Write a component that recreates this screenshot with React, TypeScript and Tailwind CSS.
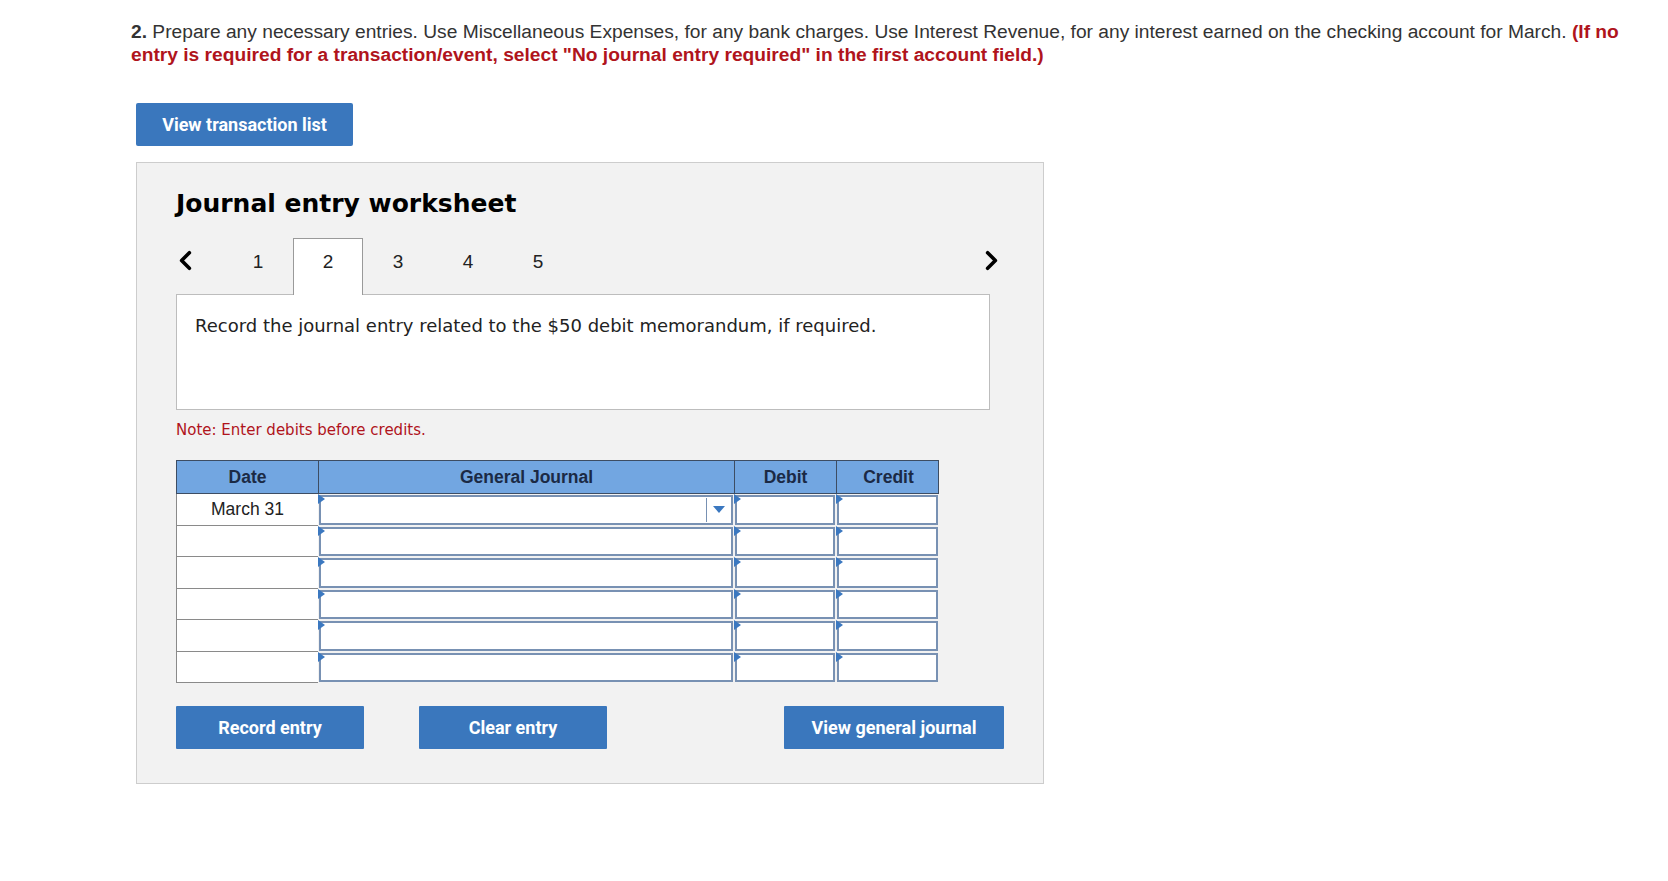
import { ChevronLeft, ChevronRight } from 'lucide-react';

const tabs = [1, 2, 3, 4, 5];
const rows = ['March 31', '', '', '', '', ''];

function Flag() {
  return (
    <svg className="absolute left-0 top-0" width="7" height="10" viewBox="0 0 7 10">
      <polygon points="0,0 7,5 0,10" fill="#3b78c0" />
    </svg>
  );
}

function InputCell({ dropdown }: { dropdown?: boolean }) {
  return (
    <div className="relative h-full p-[1px] bg-[#f2f2f2]">
      <div className="relative h-full bg-white border-2 border-[#7891b3] flex justify-end">
        {dropdown && (
          <div className="w-[25px] my-[1px] border-l border-[#7891b3] flex items-center justify-center">
            <svg width="12" height="7" viewBox="0 0 12 7">
              <polygon points="0,0 12,0 6,7" fill="#3b78c0" />
            </svg>
          </div>
        )}
      </div>
      <Flag />
    </div>
  );
}

export default function App() {
  return (
    <div className="min-h-screen bg-white font-['Liberation_Sans',Arial,sans-serif] text-[#333]">
      <div className="pl-[131px] pt-[20px]">
        <p className="w-[1510px] text-[19.2px] leading-[23px]">
          <b>2.</b> Prepare any necessary entries. Use Miscellaneous Expenses, for any bank charges. Use Interest Revenue, for any interest earned on the checking account for March.{' '}
          <b className="text-[#b0141c]">
            (If no entry is required for a transaction/event, select "No journal entry required" in the first account field.)
          </b>
        </p>
      </div>

      <div className="pl-[136px] pt-[37px] pb-10">
        <button className="h-[43px] w-[217px] bg-[#3a77bd] rounded-[2px] text-white font-['Roboto',sans-serif] font-bold text-[18px]">
          View transaction list
        </button>

        <div className="mt-[16px] w-[908px] bg-[#f2f2f2] border border-[#cdcdcd] pl-[39px] pr-[53px] pt-[26px] pb-[34px]">
          <h2 className="font-['DejaVu_Sans',Verdana,sans-serif] font-bold text-[25px] leading-[30px] text-black">
            Journal entry worksheet
          </h2>

          {/* tabs */}
          <div className="mt-[19px] flex items-stretch h-[56px] w-[823px] relative z-10">
            <div className="w-[47px] flex items-center pb-[12px]">
              <ChevronLeft className="w-[31px] h-[31px] -ml-[6px] text-black" strokeWidth={2.8} />
            </div>
            {tabs.map((t) => (
              <div
                key={t}
                className={
                  t === 2
                    ? 'w-[70px] -mb-[1px] pb-[9px] flex items-center justify-center bg-white border border-b-0 border-[#9a9a9a] text-[19px] text-[#222]'
                    : 'w-[70px] pb-[8px] flex items-center justify-center text-[19px] text-[#222]'
                }
              >
                {t}
              </div>
            ))}
            <div className="flex-1 flex items-center justify-end pb-[12px]">
              <ChevronRight className="w-[31px] h-[31px] -mr-[8px] text-black" strokeWidth={2.8} />
            </div>
          </div>

          <div className="w-[814px] h-[116px] bg-white border border-[#bdbdbd] px-[18px] pt-[18px]">
            <p className="font-['DejaVu_Sans',Verdana,sans-serif] text-[18px] leading-[26px] text-[#222]">
              Record the journal entry related to the $50 debit memorandum, if required.
            </p>
          </div>

          <p className="mt-[11px] font-['DejaVu_Sans',Verdana,sans-serif] text-[15px] leading-[18px] text-[#b0141c]">
            Note: Enter debits before credits.
          </p>

          {/* table */}
          <div className="mt-[21px] w-[763px]">
            <div className="grid grid-cols-[142px_416px_102px_103px] h-[34px] bg-[#72a6e1] border border-[#3d4d63] text-[17.5px] font-bold text-[#1b2a45]">
              <div className="flex items-center justify-center border-r border-[#3d4d63]">Date</div>
              <div className="flex items-center justify-center border-r border-[#3d4d63]">General Journal</div>
              <div className="flex items-center justify-center border-r border-[#3d4d63]">Debit</div>
              <div className="flex items-center justify-center">Credit</div>
            </div>
            {rows.map((d, i) => (
              <div key={i} className="grid grid-cols-[142px_416px_102px_103px] h-[31.5px]">
                <div className="bg-white border-l border-b border-[#8a8a8a] flex items-center justify-center text-[17.5px] text-[#222]">
                  {d}
                </div>
                <InputCell dropdown={i === 0} />
                <InputCell />
                <InputCell />
              </div>
            ))}
          </div>

          <div className="mt-[23px] flex items-center w-[828px] font-['Roboto',sans-serif] font-bold text-[18px] text-white">
            <button className="h-[43px] w-[188px] bg-[#3a77bd] rounded-[1px]">Record entry</button>
            <button className="ml-[55px] h-[43px] w-[188px] bg-[#3a77bd] rounded-[1px]">Clear entry</button>
            <button className="ml-auto h-[43px] w-[220px] bg-[#3a77bd] rounded-[1px]">View general journal</button>
          </div>
        </div>
      </div>
    </div>
  );
}
